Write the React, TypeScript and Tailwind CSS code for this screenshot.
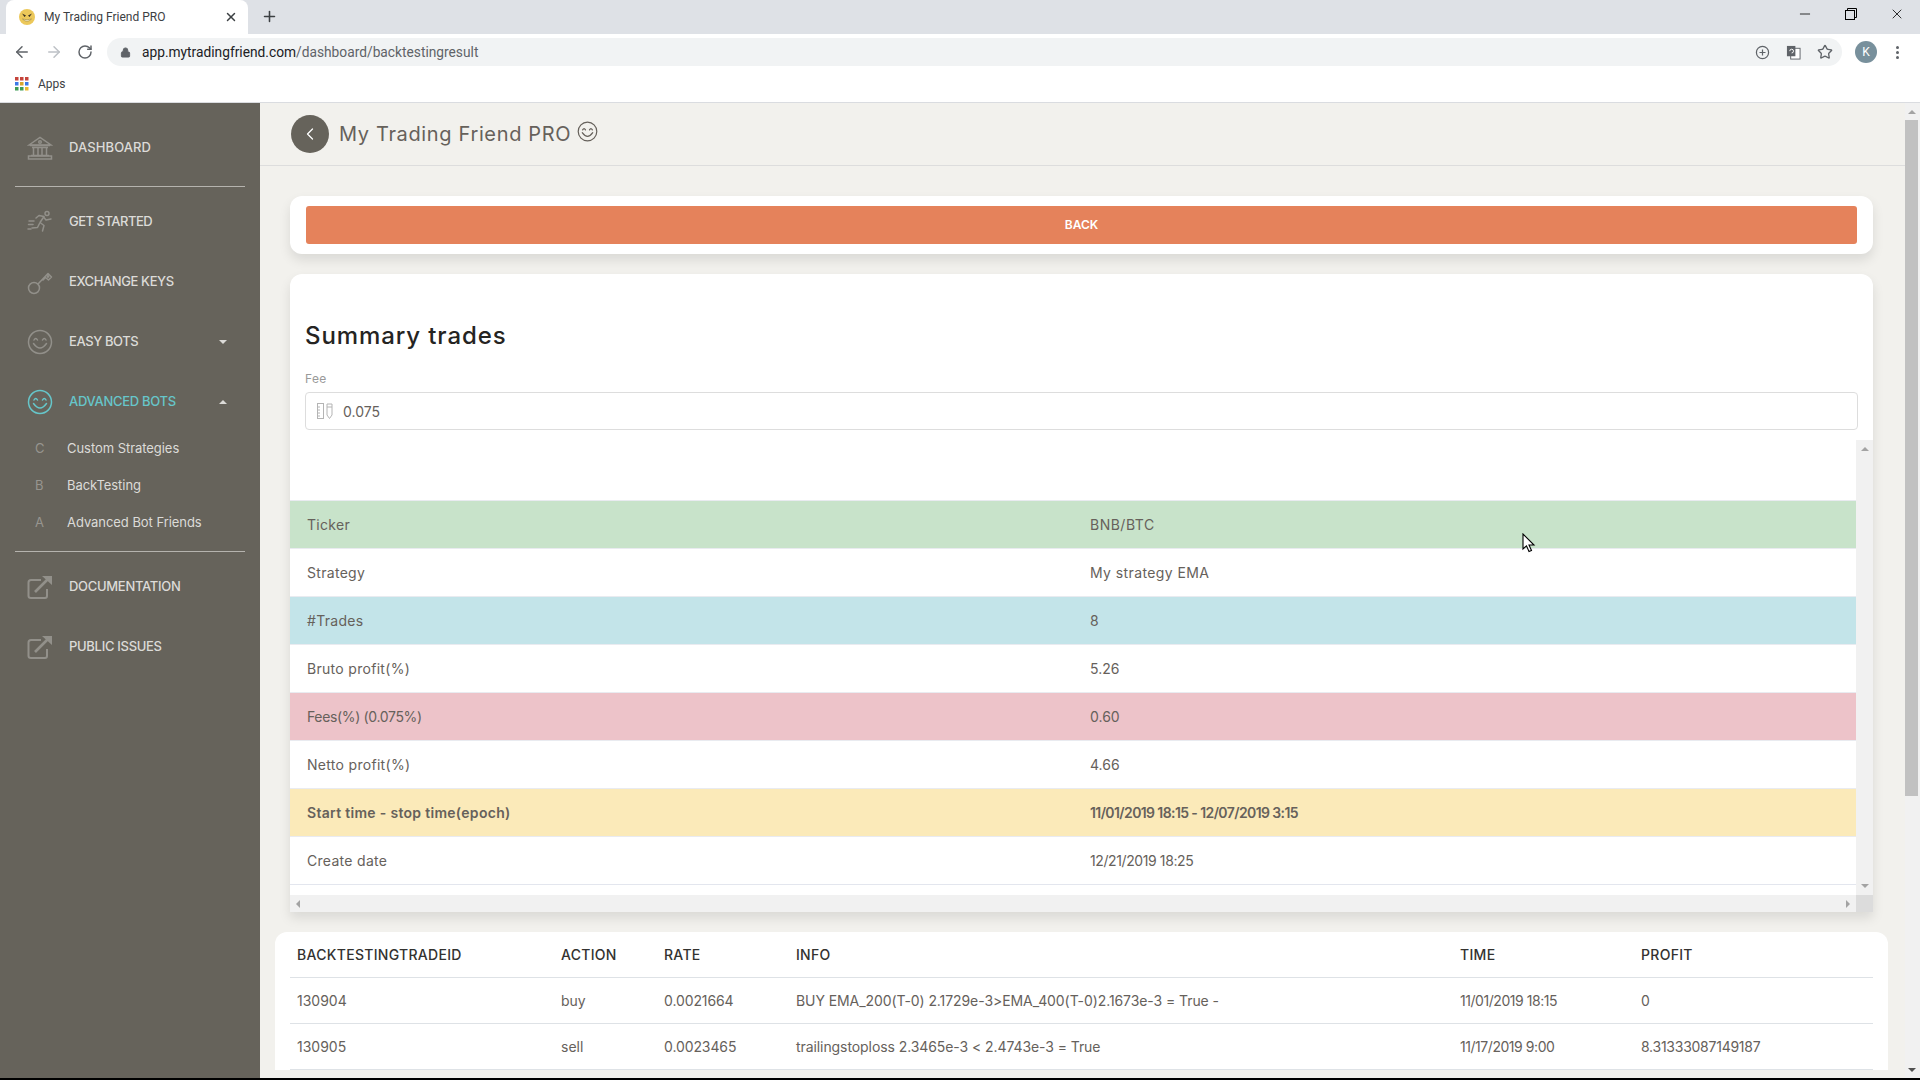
import { ArrowLeft, ArrowRight, ChevronLeft, Lock, Minus, Plus, RotateCw, Star, X } from "lucide-react";

const summaryRows = [
	{ label: "Ticker", value: "BNB/BTC", cls: "bg-[#c8e3ca]", valueCls: "tracking-[0.5px]" },
	{ label: "Strategy", value: "My strategy EMA", cls: "bg-white", valueCls: "tracking-[0.4px]" },
	{ label: "#Trades", value: "8", cls: "bg-[#c3e4e9]" },
	{ label: "Bruto profit(%)", value: "5.26", cls: "bg-white" },
	{ label: "Fees(%) (0.075%)", value: "0.60", cls: "bg-[#edc3c9]", labelCls: "tracking-[-0.35px]" },
	{ label: "Netto profit(%)", value: "4.66", cls: "bg-white" },
	{
		label: "Start time - stop time(epoch)",
		value: "11/01/2019 18:15 - 12/07/2019 3:15",
		cls: "bg-[#fbeab9] font-semibold",
		valueCls: "tracking-[-0.6px]",
	},
	{ label: "Create date", value: "12/21/2019 18:25", cls: "bg-white", valueCls: "tracking-[-0.4px]" },
];

const trades = [
	["130904", "buy", "0.0021664", "BUY EMA_200(T-0) 2.1729e-3>EMA_400(T-0)2.1673e-3 = True -", "11/01/2019 18:15", "0"],
	["130905", "sell", "0.0023465", "trailingstoploss 2.3465e-3 < 2.4743e-3 = True", "11/17/2019 9:00", "8.31333087149187"],
];

const tradeGrid = "grid grid-cols-[265px_103px_132px_664px_181px_1fr] items-center pl-[6px] border-b border-[#dee2e6]";

function BankIcon() {
	return (
		<svg viewBox="0 0 26 26" className="w-[26px] h-[26px]" fill="none" stroke="currentColor" strokeWidth="1.5">
			<path d="M2 10 L13 2.5 L24 10 Z" />
			<circle cx="13" cy="7" r="1.3" />
			<path d="M3 10.5 H23 M5 12.5 H21 M6.5 12.5 V20 M11 12.5 V20 M15 12.5 V20 M19.5 12.5 V20 M4 20.5 H22" />
			<rect x="1.5" y="21" width="23" height="3" />
		</svg>
	);
}

function RunnerIcon() {
	return (
		<svg viewBox="0 0 26 26" className="w-[26px] h-[26px]" fill="none" stroke="currentColor" strokeWidth="1.5" strokeLinecap="round" strokeLinejoin="round">
			<circle cx="20" cy="4.5" r="2" />
			<path d="M9 9 L12 6.5 L17 7.5 L13 13.5 L17 16.5 L15.5 22" />
			<path d="M16.5 8 L19 11 L24 10" />
			<path d="M12.5 14.5 L10.5 18.5 L5 19" />
			<path d="M2 12 H7 M1.5 15.5 H6 M1 20 H4" />
		</svg>
	);
}

function KeyIcon() {
	return (
		<svg viewBox="0 0 26 26" className="w-[26px] h-[26px]" fill="none" stroke="currentColor" strokeWidth="1.5" strokeLinejoin="round">
			<circle cx="7" cy="19" r="5.5" />
			<path d="M11 15 L21 4.5 L24.5 8 L21.5 11 L18.5 8.5 L15.5 11.5" />
			<circle cx="21" cy="7.5" r="0.7" />
		</svg>
	);
}

function SmileIcon({ className }: { className?: string }) {
	return (
		<svg viewBox="0 0 26 26" className={className ?? "w-[26px] h-[26px]"} fill="none" stroke="currentColor" strokeWidth="1.5" strokeLinecap="round">
			<circle cx="13" cy="13" r="11.5" />
			<path d="M7 11 Q8.7 7.8 10.5 11 M15.5 11 Q17.3 7.8 19 11" />
			<path d="M6.5 14.5 Q13 23.5 19.5 14.5" />
		</svg>
	);
}

function ExternalIcon() {
	return (
		<svg viewBox="0 0 26 26" className="w-[26px] h-[26px]" fill="none" stroke="currentColor" strokeWidth="2" strokeLinejoin="round">
			<path d="M14 6 H4 Q1.5 6 1.5 8.5 V22 Q1.5 24 4 24 H18 Q20 24 20 22 V15" />
			<path d="M8 18 L21 5" strokeWidth="2.6" />
			<path d="M15 2 H25 V11 Z" fill="currentColor" stroke="none" />
		</svg>
	);
}

function Caret({ up, className }: { up?: boolean; className?: string }) {
	return (
		<span
			className={`block w-0 h-0 border-x-[4px] border-x-transparent ${up ? "border-b-[4px] border-b-current" : "border-t-[4px] border-t-current"} ${className ?? ""}`}
		/>
	);
}

function SideItem({
	icon,
	label,
	caret,
	active,
	labelCls = "tracking-[-0.3px]",
}: {
	icon: React.ReactNode;
	label: string;
	caret?: "up" | "down";
	active?: boolean;
	labelCls?: string;
}) {
	return (
		<div className={`flex items-center h-[60px] pl-[27px] pr-[33px] ${active ? "text-[#66c6ca]" : "text-[#dcdbd8]"}`}>
			<span className={`w-[42px] shrink-0 ${active ? "" : "text-[#92908a]"}`}>{icon}</span>
			<span className={`flex-1 text-[13px] font-medium ${labelCls}`}>{label}</span>
			{caret && <Caret up={caret === "up"} className="text-[#dcdbd8]" />}
		</div>
	);
}

function SubItem({ letter, label }: { letter: string; label: string }) {
	return (
		<div className="flex items-center h-[37px]">
			<span className="w-[67px] pl-[35px] text-[13px] text-[#97958f]">{letter}</span>
			<span className="text-[13px] tracking-[-0.05px] text-[#dcdbd8]">{label}</span>
		</div>
	);
}

function Divider() {
	return <div className="h-px mx-[15px] bg-[#b5b3ae]" />;
}

function Sidebar() {
	return (
		<aside className="w-[260px] shrink-0 bg-[#66635b] pt-[15px]">
			<SideItem icon={<BankIcon />} label="DASHBOARD" labelCls="tracking-[0.1px]" />
			<div className="mt-[8px] mb-[5px]">
				<Divider />
			</div>
			<SideItem icon={<RunnerIcon />} label="GET STARTED" labelCls="tracking-[-0.5px]" />
			<SideItem icon={<KeyIcon />} label="EXCHANGE KEYS" labelCls="tracking-[-0.4px]" />
			<SideItem icon={<SmileIcon />} label="EASY BOTS" labelCls="tracking-[-0.4px]" caret="down" />
			<SideItem icon={<SmileIcon />} label="ADVANCED BOTS" caret="up" active />
			<div className="-mt-[2px]">
				<SubItem letter="C" label="Custom Strategies" />
				<SubItem letter="B" label="BackTesting" />
				<SubItem letter="A" label="Advanced Bot Friends" />
			</div>
			<div className="mt-[10px] mb-[5px]">
				<Divider />
			</div>
			<SideItem icon={<ExternalIcon />} label="DOCUMENTATION" />
			<SideItem icon={<ExternalIcon />} label="PUBLIC ISSUES" />
		</aside>
	);
}

function BrowserChrome() {
	return (
		<div className="shrink-0 border-b border-[#dadce0] bg-white [font-family:Roboto,sans-serif]">
			<div className="flex items-end h-[34px] bg-[#dee1e6] pl-[6px]">
				<div className="flex items-center w-[242px] h-[34px] bg-white rounded-t-lg pl-[13px] pr-[10px]">
					<svg viewBox="0 0 16 16" className="w-[16px] h-[16px] shrink-0">
						<circle cx="8" cy="8" r="8" fill="#ecc85a" />
						<path d="M3 4.5 L7 6.5 L5.5 8 Z M13 4.5 L9 6.5 L10.5 8 Z" fill="#3b3222" />
						<path d="M3.5 10 Q8 14.5 12.5 10 Q8 11.5 3.5 10 Z" fill="#fff6d0" stroke="#8a7430" strokeWidth="0.5" />
					</svg>
					<span className="ml-[9px] flex-1 text-[12px] text-[#3c4043]">My Trading Friend PRO</span>
					<X className="w-[14px] h-[14px] text-[#3c4043]" strokeWidth={2.5} />
				</div>
				<Plus className="ml-[13px] mb-[9px] w-[17px] h-[17px] text-[#3c4043]" strokeWidth={2.2} />
				<div className="flex-1" />
				<div className="flex items-center gap-[30px] pr-[15px] pb-[12px] text-black">
					<Minus className="w-[16px] h-[16px] mr-[2px]" strokeWidth={1.2} />
					<svg viewBox="0 0 12 12" className="w-[12px] h-[12px]" fill="none" stroke="currentColor">
						<rect x="0.5" y="2.5" width="9" height="9" />
						<path d="M2.5 2.5 V0.5 H11.5 V9.5 H9.5" />
					</svg>
					<X className="w-[16px] h-[16px] ml-[2px]" strokeWidth={1.2} />
				</div>
			</div>
			<div className="flex items-center h-[34px] pt-[2px] pl-[13px] text-[#5f6368]">
				<ArrowLeft className="w-[18px] h-[18px]" strokeWidth={2} />
				<ArrowRight className="ml-[14px] w-[18px] h-[18px] text-[#bdc1c6]" strokeWidth={2} />
				<RotateCw className="ml-[14px] w-[16px] h-[16px]" strokeWidth={2.2} />
				<div className="ml-[14px] flex items-center flex-1 max-w-[1735px] h-[28px] rounded-full bg-[#f1f3f4] pl-[13px] pr-[9px]">
					<Lock className="w-[11px] h-[11px] fill-current" strokeWidth={2} />
					<span className="ml-[11px] flex-1 text-[13.75px] text-[#5f6368]">
						<span className="text-[#202124]">app.mytradingfriend.com</span>/dashboard/backtestingresult
					</span>
					<span className="flex items-center gap-[16px]">
						<svg viewBox="0 0 16 16" className="w-[15px] h-[15px]" fill="none" stroke="currentColor" strokeWidth="1.3">
							<circle cx="8" cy="8" r="6.5" />
							<path d="M8 4.8 V11.2 M4.8 8 H11.2" />
						</svg>
						<svg viewBox="0 0 16 16" className="w-[15px] h-[15px]">
							<rect x="5" y="3.5" width="10" height="11.5" fill="#fff" stroke="#5f6368" />
							<rect x="1" y="1" width="9" height="11" fill="#5f6368" />
							<path d="M4 6.5 a2 2 0 1 1 2 2" fill="none" stroke="#fff" />
						</svg>
						<Star className="w-[16px] h-[16px]" strokeWidth={2} />
					</span>
				</div>
				<div className="ml-[13px] flex items-center justify-center w-[22px] h-[22px] rounded-full bg-[#78909c] text-white text-[12px]">K</div>
				<div className="ml-[19px] flex flex-col gap-[2px]">
					<span className="w-[3px] h-[3px] rounded-full bg-[#5f6368]" />
					<span className="w-[3px] h-[3px] rounded-full bg-[#5f6368]" />
					<span className="w-[3px] h-[3px] rounded-full bg-[#5f6368]" />
				</div>
			</div>
			<div className="flex items-center h-[34px] pl-[15px] pb-[2px]">
				<svg viewBox="0 0 14 14" className="w-[14px] h-[14px]">
					<path d="M0 0h3.5v3.5H0z M5 0h3.5v3.5H5z M10 0h3.5v3.5H10z" fill="#c5443b" />
					<path d="M0 5h3.5v3.5H0z" fill="#3b78e7" />
					<path d="M5 5h3.5v3.5H5z" fill="#d9a52b" />
					<path d="M10 5h3.5v3.5H10z" fill="#3b78e7" />
					<path d="M0 10h3.5v3.5H0z M5 10h3.5v3.5H5z" fill="#3f9c55" />
					<path d="M10 10h3.5v3.5H10z" fill="#e8b92f" />
				</svg>
				<span className="ml-[9px] text-[12px] text-[#3c4043]">Apps</span>
			</div>
		</div>
	);
}

function SummaryCard() {
	return (
		<section className="mt-[20px] rounded-t-xl bg-white shadow-[0_6px_12px_rgba(0,0,0,0.1)]">
			<div className="px-[15px] pt-[47px] pb-[10px]">
				<h2 className="text-[24px] leading-[30px] font-medium tracking-[0.9px] text-[#252422]">Summary trades</h2>
				<div className="mt-[21px] text-[12px] leading-[14px] tracking-[0.3px] text-[#9a9a9a]">Fee</div>
				<div className="mt-[6px] flex items-center h-[38px] rounded border border-[#dddddd] pl-[11px]">
					<svg viewBox="0 0 16 16" className="w-[16px] h-[16px] text-[#b4b4b4]" fill="none" stroke="currentColor">
						<rect x="0.5" y="0.5" width="6" height="15" />
						<path d="M0.5 4 H3 M0.5 7 H3 M0.5 10 H3 M0.5 13 H3" />
						<path d="M10 1 H15 V12 L12.5 15.5 L10 12 Z M10 4 H15" />
					</svg>
					<span className="ml-[10px] text-[14px] text-[#66615b]">0.075</span>
				</div>
			</div>
			<div className="flex">
				<div className="flex-1 pt-[60px] pb-[10px]">
					<div className="border-b border-[#e3e6ee]">
						{summaryRows.map((row) => (
							<div key={row.label} className={`flex items-center h-[48px] border-t border-[#e9ebf0] text-[14px] text-[#66615b] ${row.cls}`}>
								<span className={`w-[800px] pl-[17px] ${row.labelCls ?? "tracking-[0.3px]"}`}>{row.label}</span>
								<span className={row.valueCls}>{row.value}</span>
							</div>
						))}
					</div>
				</div>
				<div className="w-[17px] flex flex-col items-center justify-between py-[7px] bg-[#f1f1f1] text-[#a3a3a3]">
					<Caret up />
					<Caret />
				</div>
			</div>
			<div className="flex h-[17px] bg-[#f1f1f1]">
				<div className="flex-1 flex items-center justify-between px-[6px] text-[#a3a3a3]">
					<span className="w-0 h-0 border-y-[4px] border-y-transparent border-r-[4px] border-r-current" />
					<span className="w-0 h-0 border-y-[4px] border-y-transparent border-l-[4px] border-l-current" />
				</div>
				<div className="w-[17px] bg-[#dcdcdc]" />
			</div>
		</section>
	);
}

function TradesCard() {
	return (
		<section className="mt-[20px] -mx-[15px] px-[15px] rounded-t-xl bg-white">
			<div className={`${tradeGrid} h-[46px] text-[14px] font-medium tracking-[0.3px] text-[#333230]`}>
				<span className="pl-px">BACKTESTINGTRADEID</span>
				<span>ACTION</span>
				<span>RATE</span>
				<span>INFO</span>
				<span>TIME</span>
				<span>PROFIT</span>
			</div>
			{trades.map((trade) => (
				<div key={trade[0]} className={`${tradeGrid} h-[46px] text-[14px] text-[#66615b]`}>
					<span className="pl-px">{trade[0]}</span>
					<span>{trade[1]}</span>
					<span className="tracking-[-0.1px]">{trade[2]}</span>
					<span className="tracking-[-0.08px]">{trade[3]}</span>
					<span className="tracking-[-0.45px]">{trade[4]}</span>
					<span className="tracking-[-0.25px]">{trade[5]}</span>
				</div>
			))}
		</section>
	);
}

export default function App() {
	return (
		<div className="relative flex flex-col w-[1920px] h-[1080px] overflow-hidden bg-black [font-family:Inter,sans-serif]">
			<BrowserChrome />
			<div className="flex h-[975px] shrink-0">
				<Sidebar />
				<main className="flex-1 min-w-0 overflow-hidden bg-[#f2f1ed]">
					<header className="flex items-center h-[63px] border-b border-[#dddddd] pl-[31px]">
						<div className="flex items-center justify-center w-[38px] h-[38px] rounded-full bg-[#66635b] text-white">
							<ChevronLeft className="w-[20px] h-[20px]" strokeWidth={1.5} />
						</div>
						<span className="ml-[10px] text-[20px] tracking-[0.65px] text-[#66615b]">My Trading Friend PRO</span>
						<SmileIcon className="ml-[6px] mb-[5px] w-[21px] h-[23px] text-[#66615b]" />
					</header>
					<div className="pl-[30px] pr-[32px]">
						<div className="mt-[30px] px-[16px] py-[10px] rounded-xl bg-white shadow-[0_6px_12px_rgba(0,0,0,0.1)]">
							<button type="button" className="block w-full h-[38px] rounded-[3px] bg-[#e5825b] text-[12px] font-semibold text-white">BACK</button>
						</div>
						<SummaryCard />
						<TradesCard />
					</div>
				</main>
				<div className="w-[15px] shrink-0 flex flex-col items-center bg-[#f1f1f1] pr-[2px] text-[#a3a3a3]">
					<div className="h-[17px] flex items-center"><Caret up /></div>
					<div className="w-full h-[676px] bg-[#c1c1c1]" />
					<div className="flex-1" />
					<div className="h-[17px] flex items-center text-[#505050]"><Caret /></div>
				</div>
			</div>
			<svg viewBox="0 0 14 20" className="absolute left-[1522px] top-[533px] w-[14px] h-[20px]">
				<path d="M1 1 V16 L4.5 12.8 L7 18.5 L9.5 17.4 L7 12 H12 Z" fill="#fff" stroke="#000" strokeWidth="1.1" />
			</svg>
		</div>
	);
}
